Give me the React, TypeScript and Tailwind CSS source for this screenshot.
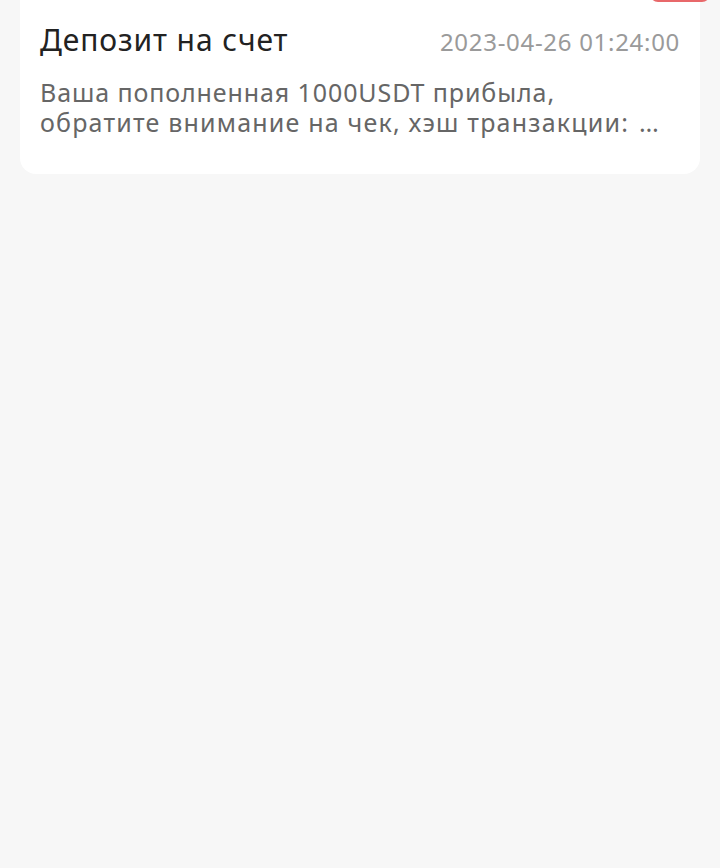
export default function App() {
  return (
    <div
      className="min-h-[868px] bg-[#f7f7f7] relative overflow-hidden"
      style={{ fontFamily: "'Noto Sans', Roboto, sans-serif" }}
    >
      {/* red badge peeking from above */}
      <div className="absolute -top-[14px] left-[650px] w-[60px] h-[16px] rounded-full bg-[#e8686a]" />

      <div className="mx-5 -mt-4 bg-white rounded-b-[16px] px-5 pt-[41px] pb-[37px]">
        <div className="flex items-baseline justify-between">
          <h3 className="text-[30px] leading-[30px] tracking-[0.9px] text-[#222]">Депозит на счет</h3>
          <span className="text-[24px] leading-[30px] tracking-[0.7px] text-[#9a9a9a]">2023-04-26 01:24:00</span>
        </div>
        <p className="mt-[20px] text-[25px] leading-[30px] text-[#666] whitespace-nowrap">
          <span className="tracking-[0.9px]">Ваша пополненная 1000USDT прибыла,</span>
          <br />
          <span className="tracking-[1.2px]">
            обратите внимание на чек, хэш транзакции:
            <span className="ml-[10px] tracking-[2.5px]">…</span>
          </span>
        </p>
      </div>
    </div>
  );
}
